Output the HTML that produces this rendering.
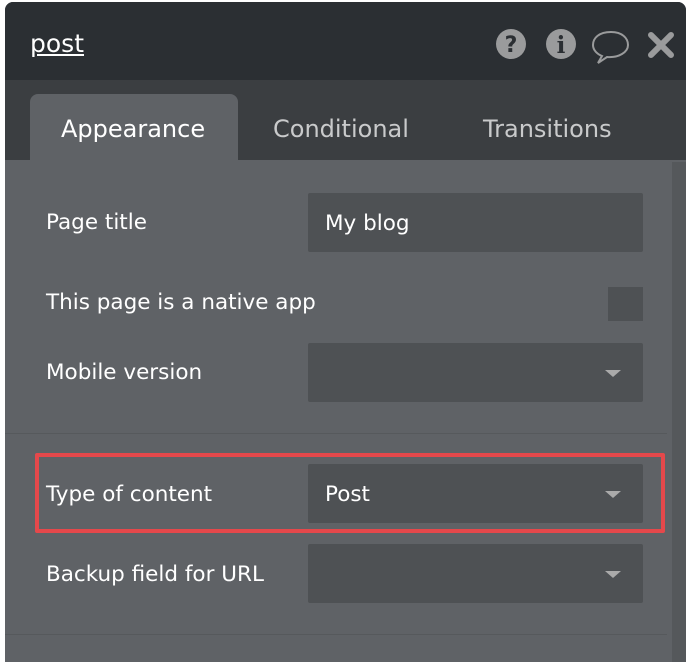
<!DOCTYPE html><html><head><style>
body{margin:0;width:688px;height:644px;background:#fff;font-family:"DejaVu Sans","Liberation Sans",sans-serif;overflow:hidden;position:relative}
.p{position:absolute;left:5px;top:2px;width:681px;height:660px;background:#5f6266;border-radius:8px 8px 0 0;overflow:hidden}
.h{position:absolute;left:0;top:0;width:681px;height:78px;background:#2b2f33}
.tb{position:absolute;left:0;top:78px;width:681px;height:80px;background:#3b3e41}
.t{position:absolute;top:115px;font-size:24px;color:#c9cacb}
.a{position:absolute;left:25px;top:92px;width:208px;height:70px;background:#5f6266;border-radius:8px 8px 0 0}
.l{position:absolute;left:46px;font-size:21.5px;color:#fff}
.i{position:absolute;left:308px;width:335px;height:59px;background:#4e5154;border-radius:2px}
.i span{position:absolute;left:17px;top:18px;font-size:21.5px;color:#fff}
.ar{position:absolute;right:22px;top:27px;width:0;height:0;border-left:8px solid transparent;border-right:8px solid transparent;border-top:7px solid #aaa}
.rs{position:absolute;left:667px;top:160px;width:14px;height:500px;background:#55585b}
</style></head><body>
<div class="p"><div class="h"></div><div class="tb"></div><div class="a"></div><div class="rs"></div></div>
<div style="position:absolute;left:30px;top:29px;font-size:25px;color:#fff;text-decoration:underline">post</div>
<svg style="position:absolute;left:494px;top:28px" width="184" height="36">
<circle cx="17" cy="16" r="15" fill="#9a9b9c"/><text x="17" y="24" font-size="22" font-weight="bold" fill="#2b2f33" text-anchor="middle" font-family="DejaVu Sans">?</text>
<circle cx="67" cy="16" r="15" fill="#9a9b9c"/><text x="67" y="25" font-size="23" font-weight="bold" fill="#2b2f33" text-anchor="middle" font-family="DejaVu Serif">i</text>
<path d="M117 4 C105 4 99 10 99 17 C99 22 103 26 108 28 L104 35 L113 29 C125 30 134 24 134 17 C134 10 128 4 117 4Z" fill="none" stroke="#9a9b9c" stroke-width="2"/>
<path d="M157 7 L177 27 M177 7 L157 27" stroke="#9a9b9c" stroke-width="6" stroke-linecap="round"/>
</svg>
<div class="t" style="left:61px;color:#fff">Appearance</div>
<div class="t" style="left:273px">Conditional</div>
<div class="t" style="left:483px">Transitions</div>
<div class="l" style="top:210px">Page title</div>
<div class="i" style="top:193px"><span>My blog</span></div>
<div class="l" style="top:290px">This page is a native app</div>
<div style="position:absolute;left:608px;top:287px;width:35px;height:34px;background:#4e5154"></div>
<div class="l" style="top:360px">Mobile version</div>
<div class="i" style="top:343px"><div class="ar"></div></div>
<div style="position:absolute;left:5px;top:433px;width:662px;height:1px;background:#56595c"></div>
<div class="l" style="top:482px">Type of content</div>
<div class="i" style="top:464px"><span>Post</span><div class="ar"></div></div>
<div class="l" style="top:562px">Backup field for URL</div>
<div class="i" style="top:544px"><div class="ar"></div></div>
<div style="position:absolute;left:5px;top:634px;width:662px;height:1px;background:#56595c"></div>
<div style="position:absolute;left:35px;top:453px;width:622px;height:72px;border:4px solid #e5484b;border-radius:2px"></div>
</body></html>
